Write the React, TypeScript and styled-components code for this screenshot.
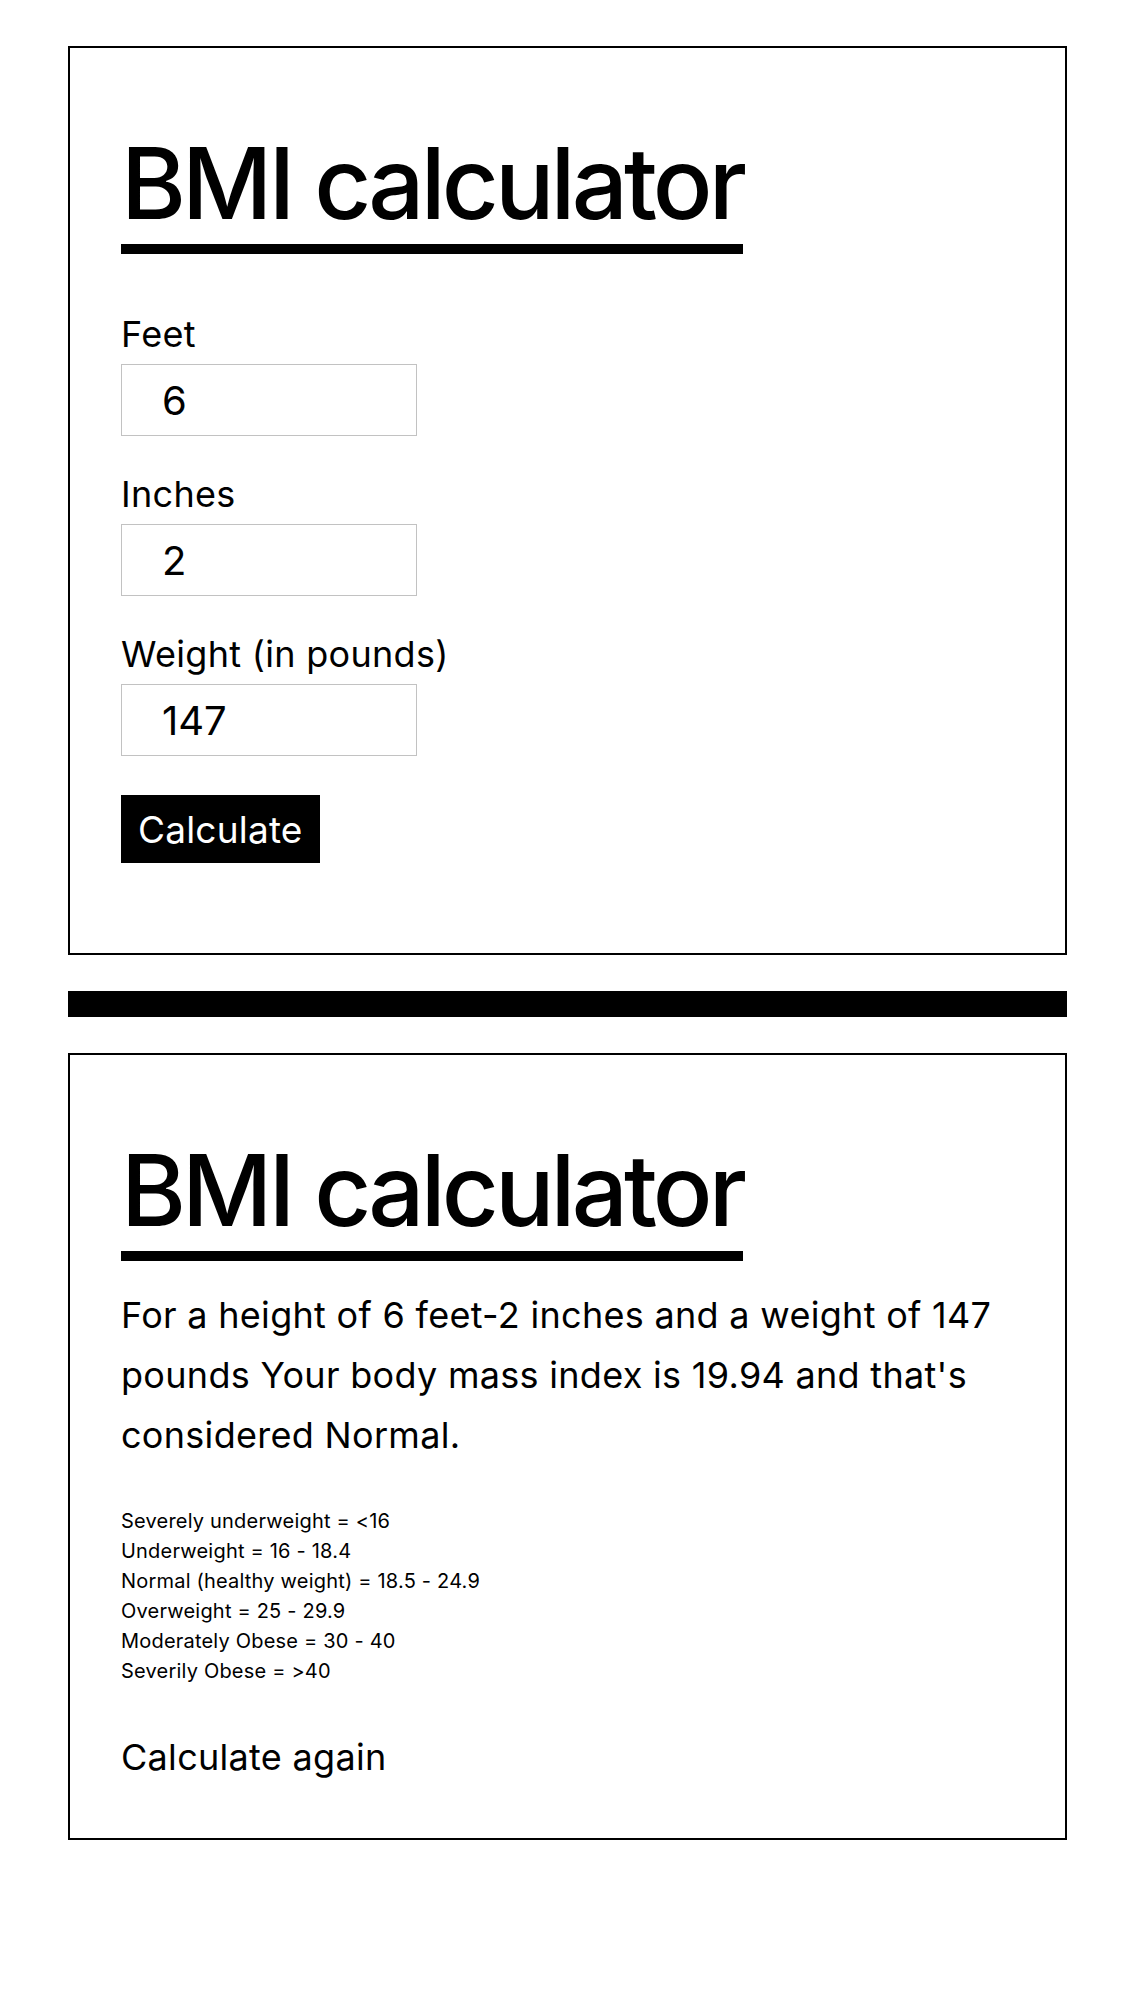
import React from "react";
import styled, { createGlobalStyle } from "styled-components";

const GlobalStyle = createGlobalStyle`
  html, body {
    margin: 0;
    padding: 0;
    background: #ffffff;
  }
  body {
    font-family: "Inter", "Noto Sans", sans-serif;
    color: #000000;
  }
  * { box-sizing: border-box; }
`;

const Page = styled.main`
  width: 999px;
  margin: 46px 0 0 68px;
  padding-bottom: 170px;
`;

const Card = styled.section`
  border: 2px solid #000000;
  padding: 50px 50px 50px 51px;
`;

const Title = styled.h1`
  width: fit-content;
  margin: 36px 0 0;
  padding-bottom: 11px;
  border-bottom: 10px solid #000000;
  font-family: "Inter", sans-serif;
  font-size: 99px;
  font-weight: 500;
  line-height: 99px;
  letter-spacing: -3.9px;
`;

const Form = styled.form`
  margin-top: 59px;
  display: flex;
  flex-direction: column;
  align-items: flex-start;
`;

const Label = styled.label`
  display: block;
  font-size: 36px;
  line-height: 42px;
  letter-spacing: 0.3px;
  margin-bottom: 9px;
`;

const Input = styled.input`
  display: block;
  width: 296px;
  height: 72px;
  margin: 0 0 37px;
  padding: 0 40px;
  border: 1px solid #c2c2c2;
  border-radius: 0;
  background: #ffffff;
  font-family: "Inter", sans-serif;
  font-size: 40px;
  color: #000000;
  outline: none;
`;

const Button = styled.button`
  height: 68px;
  margin: 2px 0 40px;
  padding: 0 17px;
  border: none;
  border-radius: 0;
  background: #000000;
  color: #ffffff;
  font-family: "Inter", sans-serif;
  font-size: 37px;
  letter-spacing: 0.2px;
  cursor: pointer;
`;

const Divider = styled.hr`
  height: 26px;
  margin: 36px 0 36px;
  border: none;
  background: #000000;
`;

const Result = styled.p`
  margin: 24px 0 0;
  font-size: 36px;
  line-height: 60px;
  letter-spacing: 0.3px;
`;

const Scale = styled.ul`
  list-style: none;
  margin: 41px 0 0;
  padding: 0;
  font-size: 20px;
  line-height: 30px;
  letter-spacing: 0.2px;
`;

const ScaleItem = styled.li`
  margin: 0;
`;

const AgainLink = styled.button`
  display: block;
  margin: 50px 0 10px;
  padding: 0;
  border: none;
  background: none;
  font-family: "Inter", sans-serif;
  font-size: 36px;
  line-height: 42px;
  letter-spacing: 0.3px;
  color: #000000;
  cursor: pointer;
`;

const fields = [
  { id: "feet", label: "Feet", value: "6" },
  { id: "inches", label: "Inches", value: "2" },
  { id: "weight", label: "Weight (in pounds)", value: "147" },
];

const ranges = [
  "Severely underweight = <16",
  "Underweight = 16 - 18.4",
  "Normal (healthy weight) = 18.5 - 24.9",
  "Overweight = 25 - 29.9",
  "Moderately Obese = 30 - 40",
  "Severily Obese = >40",
];

export default function App() {
  return (
    <>
      <GlobalStyle />
      <Page>
        <Card>
          <Title>BMI calculator</Title>
          <Form onSubmit={(e) => e.preventDefault()}>
            {fields.map((f) => (
              <React.Fragment key={f.id}>
                <Label htmlFor={f.id}>{f.label}</Label>
                <Input id={f.id} type="text" defaultValue={f.value} />
              </React.Fragment>
            ))}
            <Button type="submit">Calculate</Button>
          </Form>
        </Card>
        <Divider />
        <Card>
          <Title>BMI calculator</Title>
          <Result>
            For a height of 6 feet-2 inches and a weight of 147 pounds Your body
            mass index is 19.94 and that's considered Normal.
          </Result>
          <Scale>
            {ranges.map((r) => (
              <ScaleItem key={r}>{r}</ScaleItem>
            ))}
          </Scale>
          <AgainLink type="button">Calculate again</AgainLink>
        </Card>
      </Page>
    </>
  );
}
